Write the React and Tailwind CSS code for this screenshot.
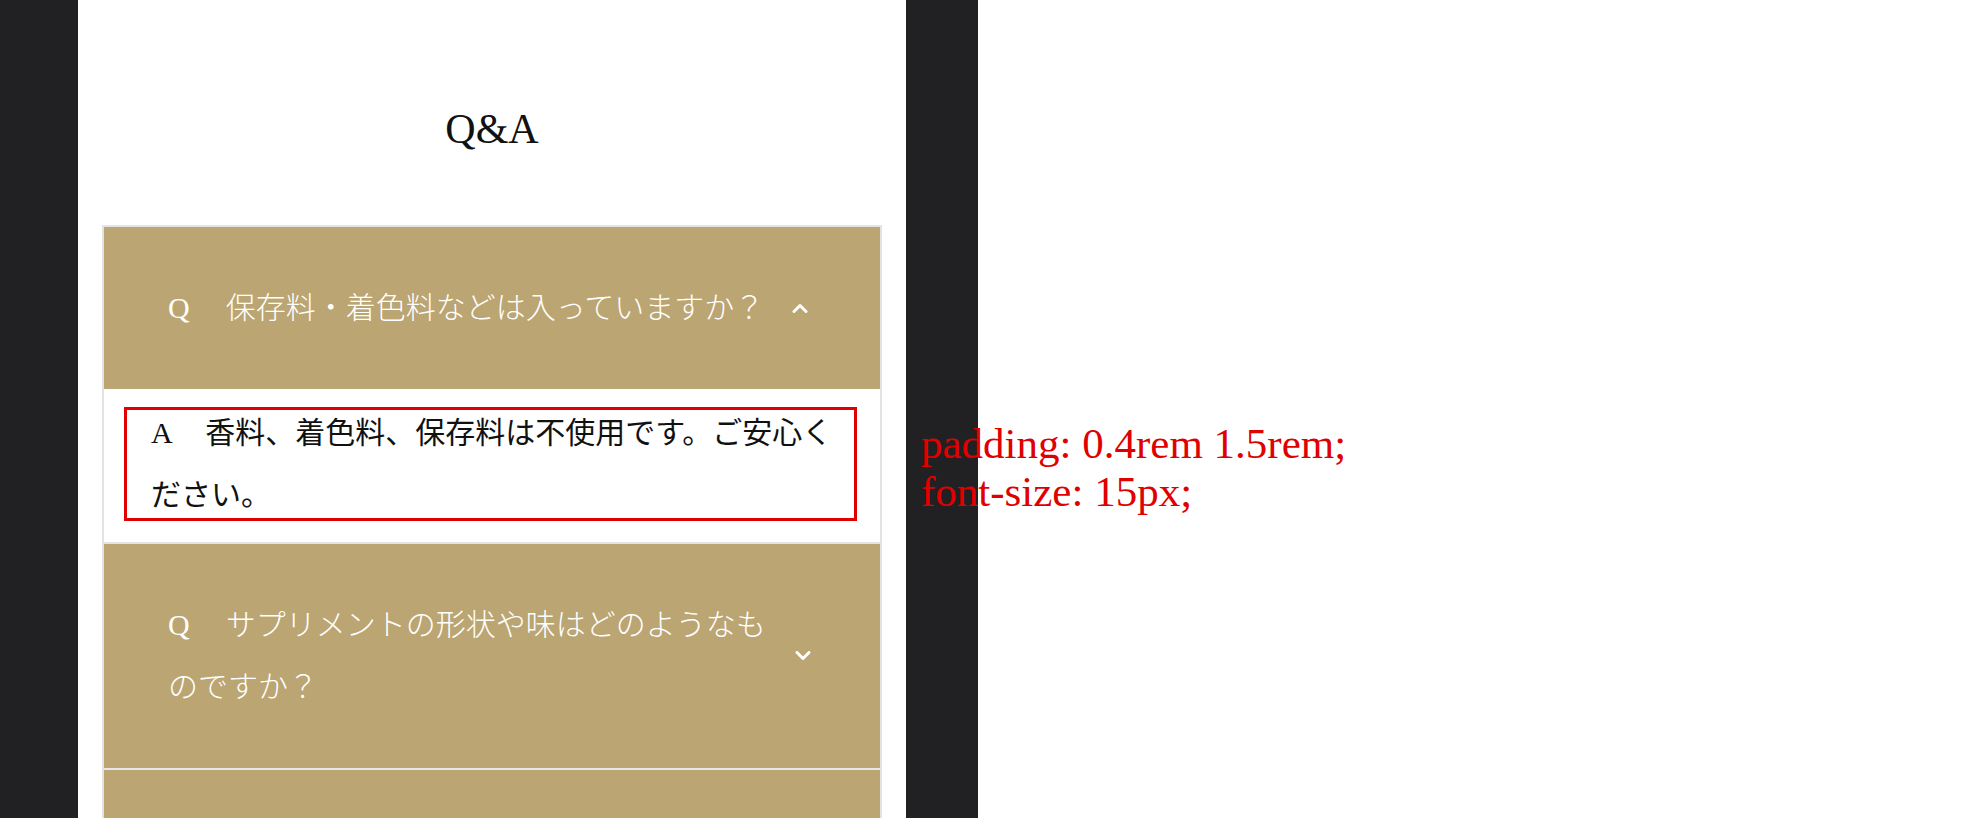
export default function App() {
  const serif = "font-['Liberation_Serif','Noto_Sans_CJK_JP',serif]";
  const Chevron = ({ up }) => (
    <svg width="16" height="10" viewBox="0 0 16 10" fill="none">
      {up ? (
        <polyline points="2,8.5 8,2.5 14,8.5" stroke="white" strokeWidth="3" strokeLinecap="round" strokeLinejoin="round" />
      ) : (
        <polyline points="2,1.5 8,7.5 14,1.5" stroke="white" strokeWidth="3" strokeLinecap="round" strokeLinejoin="round" />
      )}
    </svg>
  );
  return (
    <div className={`relative flex h-[818px] w-[1978px] overflow-hidden bg-white ${serif}`}>
      <div className="w-[78px] shrink-0 bg-[#212124]" />
      <div className="w-[828px] shrink-0 bg-white px-[24px]">
        <h2 className="pt-[108px] text-center text-[42px] leading-[42px] font-normal text-[#111]">Q&amp;A</h2>
        <div className="mt-[75px] border-x-2 border-t-2 border-[#e3e3e3]">
          <div className="flex items-center bg-[#bba572] py-[50px] pl-[64px] pr-[56px]">
            <p className="flex-1 text-[30px] leading-[62px] font-light text-white">
              {"Q\u2009　保存料・着色料などは入っていますか？"}
            </p>
            <div className="flex w-[48px] shrink-0 justify-center">
              <Chevron up />
            </div>
          </div>
          <div className="border-b-2 border-[#e3e3e3] bg-white pt-[18px] pb-[21px] pl-[20px] pr-[23px]">
            <div className="h-[114px] border-[3px] border-[#e00000] pl-[24px] pr-[10px]">
              <p className="-mt-[8px] text-[30px] leading-[62px] text-[#111]">
                {"A\u200A　香料、着色料、保存料は不使用です。ご安心ください。"}
              </p>
            </div>
          </div>
          <div className="flex items-center border-b-2 border-[#e8e8e8] bg-[#bba572] py-[50px] pl-[64px] pr-[56px]">
            <p className="flex-1 text-[30px] leading-[62px] font-light text-white">
              {"Q\u2009　サプリメントの形状や味はどのようなものですか？"}
            </p>
            <div className="flex w-[48px] shrink-0 justify-center pl-[6px]">
              <Chevron />
            </div>
          </div>
          <div className="h-[160px] bg-[#bba572]" />
        </div>
      </div>
      <div className="w-[72px] shrink-0 bg-[#212124]" />
      <div className="flex-1 bg-white" />
      <div className="absolute left-[921px] top-[420px] text-[43px] leading-[48px] text-[#e00000]">
        <div>padding: 0.4rem 1.5rem;</div>
        <div>font-size: 15px;</div>
      </div>
    </div>
  );
}
